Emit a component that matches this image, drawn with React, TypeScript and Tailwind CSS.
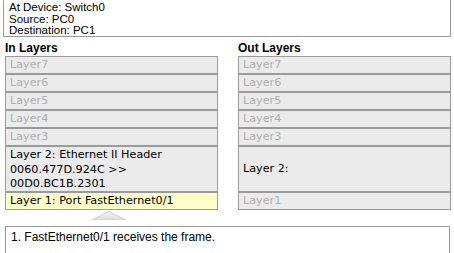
import React from "react";

const upper = ["Layer7", "Layer6", "Layer5", "Layer4", "Layer3"];

function Row({
  children,
  dim,
  tall,
  className = "",
}: {
  children: React.ReactNode;
  dim?: boolean;
  tall?: boolean;
  className?: string;
}) {
  return (
    <div
      className={`border border-[#9a9a9a] px-[4px] text-[11.2px] ${tall ? "h-[46px] leading-[14.5px]" : "leading-[16px]"} ${
        dim ? "text-[#b0b0b0]" : "text-black"
      } ${className}`}
    >
      {children}
    </div>
  );
}

function Column({ title, layer2, layer1 }: { title: string; layer2: React.ReactNode; layer1: React.ReactNode }) {
  return (
    <div className="w-[213px]">
      <div className="h-[19px] pt-[4px] text-[12px] font-bold leading-[14px] text-black [font-family:'Liberation_Sans',Arial,sans-serif]">
        {title}
      </div>
      <div className="[font-family:'DejaVu_Sans',Verdana,sans-serif]">
        {upper.map((l) => (
          <Row key={l} dim className="bg-[#ebebeb]">
            {l}
          </Row>
        ))}
        {layer2}
        {layer1}
      </div>
    </div>
  );
}

export default function App() {
  return (
    <div className="h-[253px] w-[454px] overflow-hidden bg-white [font-family:'Liberation_Sans',Arial,sans-serif]">
      <div className="mx-[3px] h-[37px] border border-t-0 border-[#9a9a9a] px-[5px] pt-[2px] text-[11.5px] leading-[11.5px] text-black">
        <div>At Device: Switch0</div>
        <div>Source: PC0</div>
        <div>Destination: PC1</div>
      </div>
      <div className="flex gap-[20px] pl-[5px]">
        <Column
          title="In Layers"
          layer2={
            <Row tall className="bg-[#ebebeb] pt-[1px]">
              Layer 2: Ethernet II Header
              <br />
              0060.477D.924C &gt;&gt;
              <br />
              00D0.BC1B.2301
            </Row>
          }
          layer1={<Row className="bg-[#ffffcc]">Layer 1: Port FastEthernet0/1</Row>}
        />
        <Column
          title="Out Layers"
          layer2={
            <Row tall className="flex items-center bg-[#ebebeb]">
              Layer 2:
            </Row>
          }
          layer1={
            <Row dim className="bg-[#ebebeb]">
              Layer1
            </Row>
          }
        />
      </div>
      <div className="flex h-[16px] w-[218px] justify-center pt-[1px]">
        <svg width="34" height="9" viewBox="0 0 34 9">
          <defs>
            <linearGradient id="tri" x1="0" y1="0" x2="0" y2="1">
              <stop offset="0" stopColor="#f4f4f4" />
              <stop offset="1" stopColor="#dcdcdc" />
            </linearGradient>
          </defs>
          <polygon points="0,9 17,0.5 34,9" fill="url(#tri)" stroke="#d0d0d0" strokeWidth="1" />
        </svg>
      </div>
      <div className="ml-[5px] mr-[4px] h-[40px] border border-b-0 border-[#9a9a9a] px-[5px] pt-[3px] text-[12px] leading-[14px] text-black">
        1. FastEthernet0/1 receives the frame.
      </div>
    </div>
  );
}
